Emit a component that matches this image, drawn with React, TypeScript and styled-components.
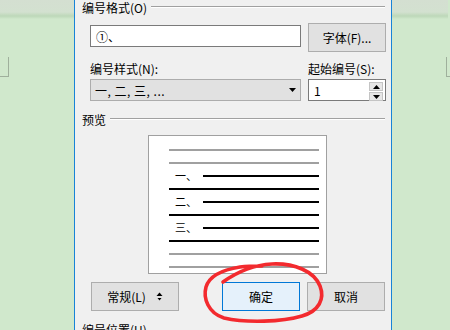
import styled, { createGlobalStyle } from 'styled-components';

const GlobalStyle = createGlobalStyle`
  html, body {
    margin: 0;
    padding: 0;
    background: #d0e8cc;
  }
  body {
    font-family: "Noto Sans CJK SC", "Noto Sans", sans-serif;
    font-size: 12px;
    color: #000;
  }
`;

const Page = styled.div`
  position: relative;
  display: flex;
  width: 450px;
  height: 330px;
  overflow: hidden;
  background: #d0e8cc;
`;

const Backdrop = styled.div<{ $width: number }>`
  flex: none;
  width: ${(p) => p.$width}px;
  display: flex;
  flex-direction: column;
  background: linear-gradient(
    #d4dfd1 0,
    #d3e1d0 12px,
    #bdd8b9 16px,
    #c9e2c5 18px,
    #d0e8cc 19px
  );
`;

const PageCorner = styled.div<{ $side: 'left' | 'right' }>`
  margin-top: 57px;
  width: 8px;
  height: 19px;
  border-bottom: 1px solid #9fb09c;
  ${(p) =>
    p.$side === 'left'
      ? 'border-right: 1px solid #9fb09c;'
      : 'border-left: 1px solid #9fb09c; margin-left: 54px;'}
`;

const Dialog = styled.div`
  flex: none;
  width: 318px;
  box-sizing: border-box;
  border-left: 1px solid #1883d7;
  border-right: 1px solid #1883d7;
  background: #f0f0f0;
  padding: 0 6px 0 7px;
  display: flex;
  flex-direction: column;
`;

const GroupHeader = styled.div<{ $top: number }>`
  display: flex;
  margin-top: ${(p) => p.$top}px;
  height: 16px;
  line-height: 16px;
  white-space: nowrap;
`;

const GroupRule = styled.div`
  flex: 1;
  height: 1px;
  margin: 6px 0 0 4px;
  background: #a0a0a0;
  border-bottom: 1px solid #ffffff;
`;

const FieldGrid = styled.div<{ $top: number }>`
  display: grid;
  grid-template-columns: 211px 78px;
  column-gap: 7px;
  align-items: start;
  margin: ${(p) => p.$top}px 0 0 8px;
`;

const FieldLabel = styled.div`
  height: 16px;
  line-height: 16px;
  white-space: nowrap;
`;

const TextBox = styled.div<{ $offset?: number }>`
  box-sizing: border-box;
  height: 22px;
  margin-top: ${(p) => p.$offset ?? 0}px;
  background: #fff;
  border: 1px solid #7a7a7a;
  display: flex;
  align-items: center;
  padding-left: 5px;
  position: relative;
`;

const Button = styled.div<{ $primary?: boolean; $width: number }>`
  box-sizing: border-box;
  width: ${(p) => p.$width}px;
  height: 29px;
  display: flex;
  align-items: center;
  justify-content: center;
  gap: 10px;
  background: ${(p) => (p.$primary ? '#e5f1fb' : '#e1e1e1')};
  border: 1px solid ${(p) => (p.$primary ? '#0078d7' : '#adadad')};
`;

const Select = styled.div`
  box-sizing: border-box;
  height: 22px;
  background: #e1e1e1;
  border: 1px solid #acacac;
  display: flex;
  align-items: center;
  justify-content: space-between;
  padding: 0 4px 0 4px;
  letter-spacing: 0.5px;
`;

const SpinButtons = styled.div`
  position: absolute;
  right: 2px;
  top: 2px;
  display: flex;
  flex-direction: column;
  gap: 1px;
`;

const SpinButton = styled.div`
  width: 12px;
  height: 7px;
  background: #e6e6e6;
  border: 1px solid #c4c4c4;
  box-sizing: content-box;
  display: flex;
  align-items: center;
  justify-content: center;
`;

const Preview = styled.div`
  box-sizing: border-box;
  width: 179px;
  height: 139px;
  margin: 7px 0 0 66px;
  background: #fff;
  border: 1px solid #a0a0a0;
  padding: 7px 7px 0 20px;
  display: flex;
  flex-direction: column;
`;

const PreviewRow = styled.div`
  height: 13px;
  display: flex;
  align-items: center;
`;

const PreviewNum = styled.span`
  width: 34px;
  box-sizing: border-box;
  padding-left: 6px;
  font-size: 11px;
  line-height: 13px;
  white-space: nowrap;
`;

const PreviewLine = styled.div<{ $tone: 'gray' | 'black' }>`
  flex: 1;
  height: 2px;
  background: ${(p) => (p.$tone === 'gray' ? '#a0a0a0' : '#000')};
`;

const ButtonRow = styled.div`
  display: flex;
  gap: 7px;
  margin: 8px 0 0 9px;
`;

const Spacer = styled.div`
  flex: 1;
`;

const Scribble = styled.svg`
  position: absolute;
  left: 0;
  top: 0;
  pointer-events: none;
`;

const Triangle = ({ down }: { down?: boolean }) => (
  <svg width="7" height="4" viewBox="0 0 7 4">
    <path d={down ? 'M0 0H7L3.5 4Z' : 'M0 4H7L3.5 0Z'} fill="#000" />
  </svg>
);

const UpDown = () => (
  <svg width="7" height="9" viewBox="0 0 7 9">
    <path d="M0.5 4H6.5L3.5 0.5Z" fill="#000" />
    <path d="M1.5 6H5.5L3.5 8.5Z" fill="#000" />
  </svg>
);

type Row = { tone: 'gray' | 'black'; num?: string };

const previewRows: Row[] = [
  { tone: 'gray' },
  { tone: 'gray' },
  { tone: 'black', num: '一、' },
  { tone: 'black' },
  { tone: 'black', num: '二、' },
  { tone: 'black' },
  { tone: 'black', num: '三、' },
  { tone: 'black' },
  { tone: 'gray' },
  { tone: 'gray' },
];

export default function App() {
  return (
    <>
      <GlobalStyle />
      <Page>
        <Backdrop $width={74}>
          <PageCorner $side="left" />
        </Backdrop>
        <Dialog>
          <GroupHeader $top={0}>
            编号格式(O)
            <GroupRule />
          </GroupHeader>
          <FieldGrid $top={7}>
            <TextBox $offset={2}>①、</TextBox>
            <Button $width={78}>字体(F)...</Button>
          </FieldGrid>
          <FieldGrid $top={9}>
            <FieldLabel>编号样式(N):</FieldLabel>
            <FieldLabel>起始编号(S):</FieldLabel>
          </FieldGrid>
          <FieldGrid $top={2}>
            <Select>
              <span>一, 二, 三, ...</span>
              <Triangle down />
            </Select>
            <TextBox>
              1
              <SpinButtons>
                <SpinButton>
                  <Triangle />
                </SpinButton>
                <SpinButton>
                  <Triangle down />
                </SpinButton>
              </SpinButtons>
            </TextBox>
          </FieldGrid>
          <GroupHeader $top={11}>
            预览
            <GroupRule />
          </GroupHeader>
          <Preview>
            {previewRows.map((row, i) => (
              <PreviewRow key={i}>
                {row.num && <PreviewNum>{row.num}</PreviewNum>}
                <PreviewLine $tone={row.tone} />
              </PreviewRow>
            ))}
          </Preview>
          <ButtonRow>
            <Button $width={88}>
              常规(L)
              <UpDown />
            </Button>
            <Spacer />
            <Button $width={78} $primary>
              确定
            </Button>
            <Button $width={78}>取消</Button>
          </ButtonRow>
          <GroupHeader $top={11}>编号位置(U)</GroupHeader>
        </Dialog>
        <Backdrop $width={56}>
          <PageCorner $side="right" />
        </Backdrop>
        <Scribble width="450" height="330" viewBox="0 0 450 330">
          <path
            d="M223 282 C237 272 252 265 272 264 C294 263 314 271 320 286 C325 299 319 311 302 316 C282 322 246 323 224 318 C208 313 203 298 206 287 C209 277 221 270 240 267 C248 266 255 266 262 266"
            fill="none"
            stroke="#f32a2e"
            strokeWidth="3.6"
            strokeLinecap="round"
            strokeLinejoin="round"
          />
        </Scribble>
      </Page>
    </>
  );
}
